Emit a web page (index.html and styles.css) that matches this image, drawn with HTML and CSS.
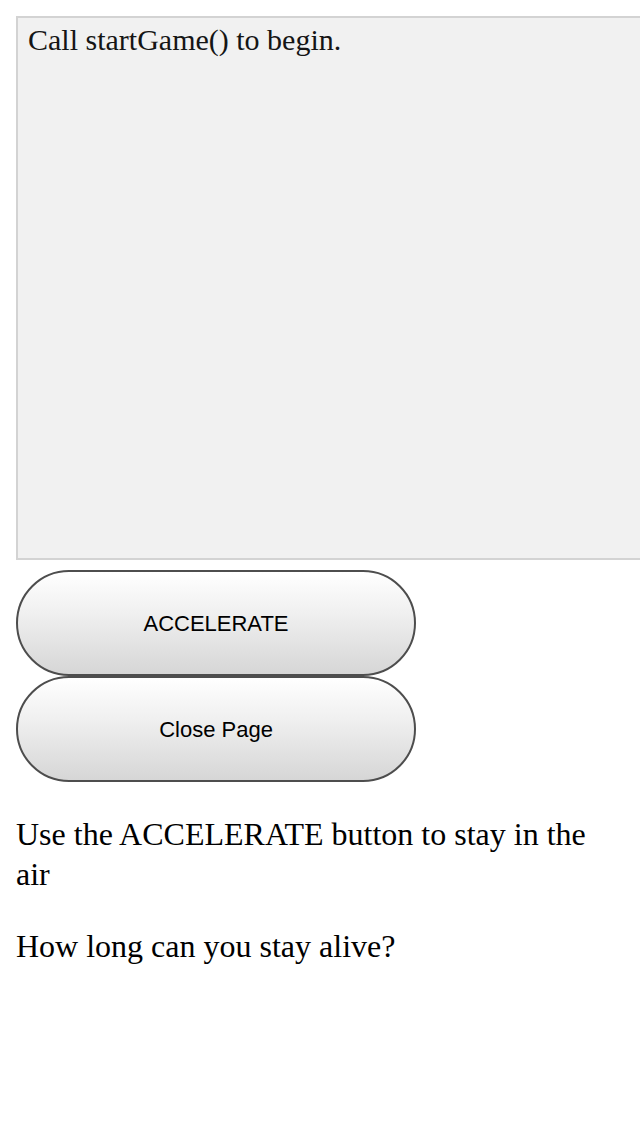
FILE: index.html
```html
<!DOCTYPE html>
<html>
<head>
<meta charset="utf-8">
<link rel="stylesheet" href="styles.css">
</head>
<body>
<div class="game">
  <div class="stage">
    <div class="canvas"><span class="canvas-text">Call startGame() to begin.</span></div>
  </div>
  <div class="controls">
    <button class="btn">ACCELERATE</button>
    <button class="btn">Close Page</button>
  </div>
</div>
<p class="info">Use the ACCELERATE button to stay in the air</p>
<p class="info">How long can you stay alive?</p>
</body>
</html>
```

FILE: styles.css
```css
html, body {
  margin: 0;
  padding: 0;
  overflow: hidden;
}
body {
  padding: 16px;
  font-family: "Liberation Serif", "Times New Roman", serif;
  font-size: 32px;
  line-height: 40px;
  color: #000;
  background: #fff;
}
.game {
  display: flex;
  flex-direction: column;
  gap: 10px;
}
.stage {
  margin-right: -16px;
  overflow: hidden;
}
.canvas {
  box-sizing: content-box;
  width: 960px;
  height: 540px;
  border: 2px solid #d3d3d3;
  background: #f1f1f1;
}
.canvas-text {
  display: block;
  padding: 5px 0 0 10px;
  font-family: "Liberation Serif", "Times New Roman", serif;
  font-size: 30px;
  line-height: 34px;
  color: #151515;
}
.controls {
  display: flex;
  flex-direction: column;
}
.btn {
  box-sizing: border-box;
  width: 400px;
  height: 106px;
  border: 2px solid #4d4d4d;
  border-radius: 53px;
  background: linear-gradient(to bottom, #ffffff 0%, #f0f0f0 40%, #d6d6d6 100%);
  font-family: "Liberation Sans", Arial, sans-serif;
  font-size: 22px;
  color: #000;
  padding: 2px 0 0;
  margin: 0;
}
.info {
  margin: 32px 0;
  max-width: 600px;
}
```
